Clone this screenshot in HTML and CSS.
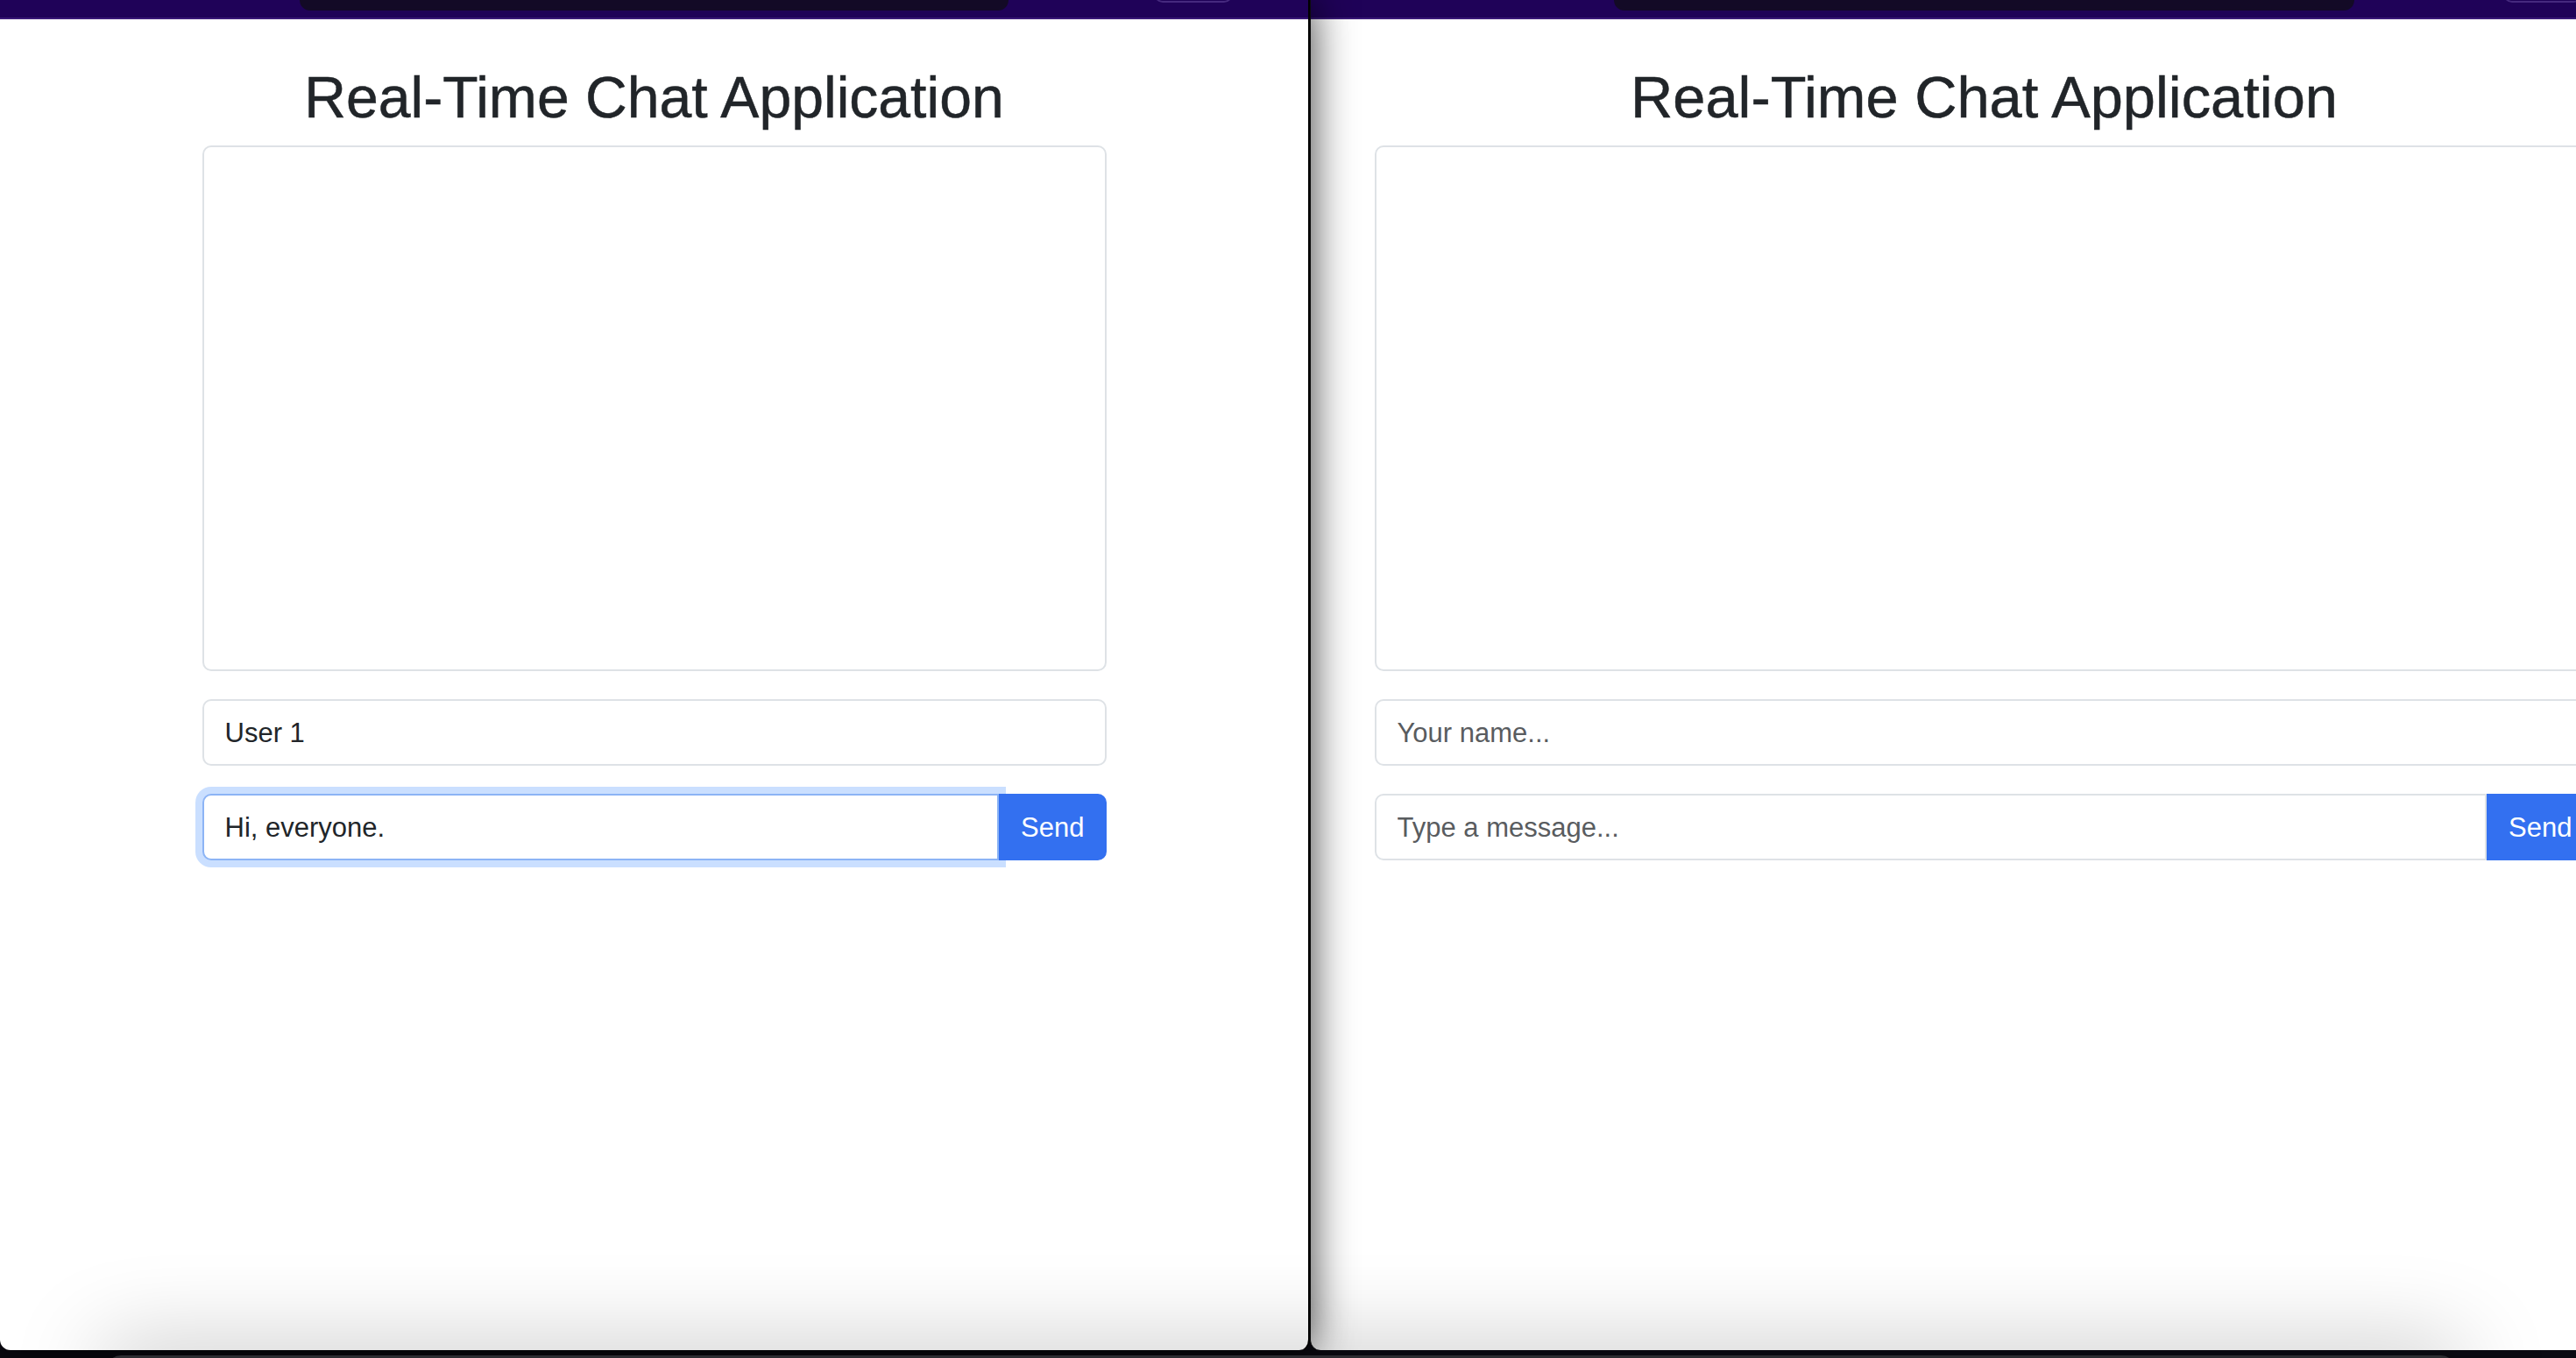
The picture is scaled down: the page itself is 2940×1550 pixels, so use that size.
FILE: index.html
```html
<!DOCTYPE html>
<html lang="en">
<head>
<meta charset="utf-8">
<title>Real-Time Chat Application</title>
<link rel="stylesheet" href="styles.css">
</head>
<body>
<div class="desktop">
  <div class="window win-left">
    <div class="toolbar">
      <div class="urlbar"></div>
      <div class="tb-btn"></div>
    </div>
    <div class="page">
      <div class="container">
        <h1 class="title">Real-Time Chat Application</h1>
        <div class="chat-box"></div>
        <input class="field" type="text" value="User 1" placeholder="Your name...">
        <div class="input-group">
          <input class="field field-focus" type="text" value="Hi, everyone." placeholder="Type a message...">
          <button class="btn-send" type="button">Send</button>
        </div>
      </div>
    </div>
  </div>

  <div class="window win-right">
    <div class="toolbar">
      <div class="urlbar"></div>
      <div class="tb-btn"></div>
    </div>
    <div class="page">
      <div class="container">
        <h1 class="title">Real-Time Chat Application</h1>
        <div class="chat-box"></div>
        <input class="field" type="text" placeholder="Your name...">
        <div class="input-group">
          <input class="field" type="text" placeholder="Type a message...">
          <button class="btn-send" type="button">Send</button>
        </div>
      </div>
    </div>
  </div>

  <div class="dock"></div>
</div>
</body>
</html>
```
FILE: styles.css
```css
html, body {
  margin: 0;
  padding: 0;
  height: 100%;
}

body {
  background: #0b0a12;
  font-family: "Liberation Sans", Arial, sans-serif;
  overflow: hidden;
}

.desktop {
  position: relative;
  width: 2940px;
  height: 1550px;
  overflow: hidden;
  background: #0b0a12;
}

.window {
  position: absolute;
  top: 0;
  height: 1541px;
  display: flex;
  flex-direction: column;
  background: #fff;
  border-radius: 0 0 12px 12px;
  overflow: hidden;
  box-sizing: border-box;
}

.win-left {
  left: 0;
  width: 1495px;
  border-right: 2px solid #000;
  z-index: 2;
  box-shadow: 0 0 50px rgba(0, 0, 0, 0.8);
}

.win-right {
  left: 1495px;
  width: 1538px;
  border-left: 1px solid #111;
  z-index: 1;
}

.toolbar {
  position: relative;
  flex: none;
  height: 22px;
  background: #1f0258;
  border-bottom: 2px solid #3a1a78;
  box-sizing: border-box;
  display: flex;
  justify-content: center;
}

.urlbar {
  width: 809px;
  height: 12px;
  background: #130a26;
  border-radius: 0 0 13px 13px;
}

.win-right .urlbar {
  width: 845px;
}

.tb-btn {
  position: absolute;
  right: 86px;
  top: -20px;
  width: 90px;
  height: 23px;
  border: 2px solid #45297e;
  border-radius: 10px;
  box-sizing: border-box;
}

.win-right .tb-btn {
  right: 86px;
}

.page {
  flex: 1;
}

.container {
  width: 1080px;
  margin: 0 auto;
  padding: 50px 24px 0;
  box-sizing: border-box;
}

.win-right .container {
  width: 1440px;
}

.title {
  margin: 0 0 15px;
  font-size: 66.1px;
  font-weight: 500;
  line-height: 79px;
  text-align: center;
  color: #212529;
  -webkit-text-stroke: 0.5px #212529;
}

.win-right .title {
  font-size: 66.8px;
}

.chat-box {
  height: 600px;
  border: 2px solid #dee2e6;
  border-radius: 10px;
  box-sizing: border-box;
  margin-bottom: 32px;
}

.field {
  display: block;
  width: 100%;
  height: 76px;
  box-sizing: border-box;
  margin: 0 0 32px;
  padding: 2px 24px 0;
  border: 2px solid #dee2e6;
  border-radius: 10px;
  background: #fff;
  color: #212529;
  font-family: "Liberation Sans", Arial, sans-serif;
  font-size: 31px;
  outline: none;
}

.field::placeholder {
  color: #595c5f;
  opacity: 1;
}

.input-group {
  display: flex;
}

.input-group .field {
  flex: 1;
  width: auto;
  min-width: 0;
  margin: 0;
  border-radius: 10px 0 0 10px;
}

.input-group .field-focus {
  border-color: #8cb4f5;
  box-shadow: 0 0 0 8px rgba(13, 110, 253, 0.22);
}

.btn-send {
  position: relative;
  z-index: 1;
  flex: none;
  height: 76px;
  padding: 2px 23px 0;
  border: 2px solid #3370f0;
  border-radius: 0 10px 10px 0;
  background: #3370f0;
  color: #fff;
  font-family: "Liberation Sans", Arial, sans-serif;
  font-size: 31px;
  cursor: pointer;
}

.dock {
  position: absolute;
  left: 122px;
  top: 1547px;
  width: 2680px;
  height: 40px;
  background: #2c2c31;
  border-radius: 16px;
  z-index: 3;
  box-shadow: 0 0 100px 10px rgba(0, 0, 0, 0.25);
}
```
